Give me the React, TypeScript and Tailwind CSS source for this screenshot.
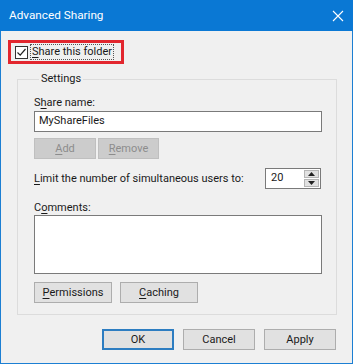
import React from 'react';

const font = { fontFamily: 'Roboto, "Noto Sans", sans-serif' };

const Btn = ({
  children,
  disabled,
  primary,
  className,
}: {
  children: any;
  disabled?: boolean;
  primary?: boolean;
  className?: string;
}) => (
  <button
    type="button"
    className={`flex items-center justify-center h-[21px] text-[11px] leading-none ${
      disabled
        ? 'bg-[#cccccc] border border-[#bfbfbf] text-[#8c8c8c]'
        : primary
          ? 'bg-[#e1e1e1] border-2 border-[#2d7dc1] text-[#1a1a1a]'
          : 'bg-[#e1e1e1] border border-[#adadad] text-[#1a1a1a]'
    } ${className || ''}`}
  >
    {children}
  </button>
);

const App = () => {
  return (
    <div
      className="w-[353px] h-[364px] bg-[#f0f0f0] border-x border-b border-[#1c7fd3] flex flex-col text-[#1a1a1a] text-[11px]"
      style={font}
    >
      {/* title bar */}
      <div className="h-[31px] bg-[#0a78d4] flex items-center justify-between pl-[9px] pr-[8px] -mx-px">
        <span className="text-white text-[11.75px]">Advanced Sharing</span>
        <svg width="12" height="12" viewBox="0 0 12 12" className="mr-[1px]">
          <path d="M1 1 L11 11 M11 1 L1 11" stroke="white" strokeWidth="1.1" />
        </svg>
      </div>

      {/* share this folder */}
      <div className="mt-[9px] ml-[7px] w-[116px] h-[24px] border-[3px] border-[#e2262e] flex items-center pl-[4px]">
        <span className="w-[13px] h-[13px] border border-[#333] bg-white flex items-center justify-center">
          <svg width="11" height="11" viewBox="0 0 11 11">
            <path d="M1.5 5.5 L4.2 8.2 L9.5 2" stroke="#222" strokeWidth="1.2" fill="none" />
          </svg>
        </span>
        <span className="ml-[2px] border border-dotted border-[#555] px-[1px] leading-[14px] whitespace-nowrap">
          <span className="underline underline-offset-2">S</span>hare this folder
        </span>
      </div>

      {/* settings group */}
      <fieldset className="ml-[16px] mt-[8px] w-[320px] h-[243px] border border-[#dcdcdc] pl-[16px] pr-[14px]">
        <legend className="ml-[5px] px-[2px] leading-[14px]">Settings</legend>
        <div className="mt-[10px] leading-[14px]">
          S<span className="underline underline-offset-2">h</span>are name:
        </div>
        <div className="mt-[1px] h-[21px] w-[288px] bg-white border border-[#7a7a7a] flex items-center pl-[4px]">
          MyShareFiles
        </div>
        <div className="mt-[6px] flex gap-[2px]">
          <Btn disabled className="w-[62px]">
            <span className="underline underline-offset-2">A</span>dd
          </Btn>
          <Btn disabled className="w-[61px]">
            <span className="underline underline-offset-2">R</span>emove
          </Btn>
        </div>
        <div className="mt-[9px] flex items-center justify-between w-[288px]">
          <span className="leading-[14px] whitespace-nowrap">
            <span className="underline underline-offset-2">L</span>imit the number of simultaneous users to:
          </span>
          <div className="flex h-[21px] w-[56px] bg-white border border-[#7a7a7a] mr-[1px]">
            <span className="flex-1 pl-[5px] flex items-center">20</span>
            <div className="w-[17px] flex flex-col p-px gap-px">
              <span className="flex-1 bg-[#e1e1e1] border border-[#b5b5b5] flex items-center justify-center">
                <svg width="7" height="4" viewBox="0 0 7 4">
                  <path d="M0 4 L3.5 0 L7 4 Z" fill="#222" />
                </svg>
              </span>
              <span className="flex-1 bg-[#e1e1e1] border border-[#b5b5b5] flex items-center justify-center">
                <svg width="7" height="4" viewBox="0 0 7 4">
                  <path d="M0 0 L3.5 4 L7 0 Z" fill="#222" />
                </svg>
              </span>
            </div>
          </div>
        </div>
        <div className="mt-[12px] leading-[14px]">
          C<span className="underline underline-offset-2">o</span>mments:
        </div>
        <div className="h-[59px] w-[288px] bg-white border border-[#7a7a7a]" />
        <div className="mt-[8px] flex gap-[8px]">
          <Btn className="w-[78px]">
            <span className="underline underline-offset-2">P</span>ermissions
          </Btn>
          <Btn className="w-[78px]">
            <span className="underline underline-offset-2">C</span>aching
          </Btn>
        </div>
      </fieldset>

      {/* dialog buttons */}
      <div className="mt-[14px] ml-[101px] flex gap-[9px]">
        <Btn primary className="w-[72px]">OK</Btn>
        <Btn className="w-[72px]">Cancel</Btn>
        <Btn className="w-[72px]">Apply</Btn>
      </div>
    </div>
  );
};

export default App;
